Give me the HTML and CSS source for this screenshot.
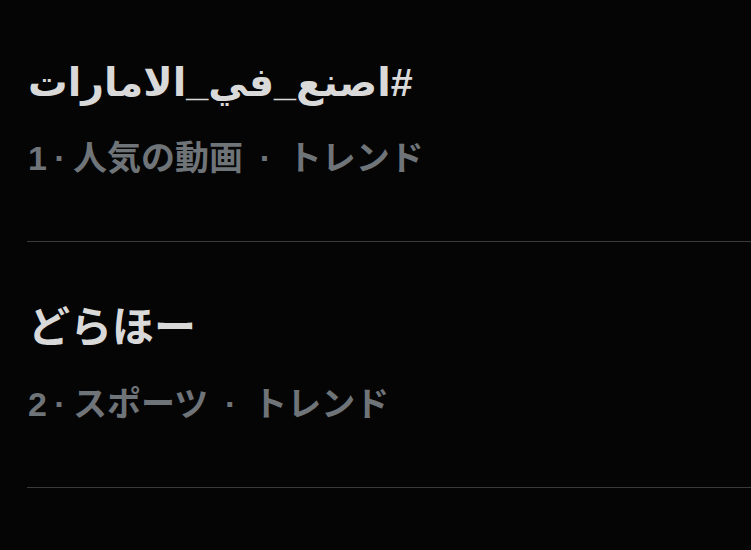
FILE: index.html
```html
<!DOCTYPE html>
<html lang="ja">
<head>
<meta charset="utf-8">
<link rel="stylesheet" href="styles.css">
</head>
<body>
<div class="trends">
  <div class="trend">
    <div class="title title-ar" dir="auto">#اصنع_في_الامارات</div>
    <div class="meta">1<span class="sep">·</span>人気の動画 <span class="sep">·</span> トレンド</div>
  </div>
  <div class="trend">
    <div class="title">どらほー</div>
    <div class="meta">2<span class="sep">·</span>スポーツ <span class="sep">·</span> トレンド</div>
  </div>
</div>
</body>
</html>
```
FILE: styles.css
```css
html, body {
  margin: 0;
  padding: 0;
  background: #050505;
}
body {
  width: 751px;
  height: 550px;
  overflow: hidden;
  font-family: "Liberation Sans", "DejaVu Sans", "Noto Sans CJK JP", sans-serif;
  font-weight: bold;
}
.trends {
  display: flex;
  flex-direction: column;
  margin-top: -4px;
}
.trend {
  display: flex;
  flex-direction: column;
  gap: 32px;
  padding: 62px 0 62px 1px;
  margin-left: 27px;
  border-bottom: 1px solid #3a3a3a;
}
.title {
  font-size: 42px;
  line-height: 48px;
  color: #d9d9d9;
  text-align: left;
  white-space: nowrap;
}
.title-ar {
  font-size: 39.5px;
}
.meta {
  font-size: 34px;
  line-height: 41px;
  color: #6f7479;
  white-space: nowrap;
}
.sep {
  display: inline-block;
  width: 26px;
  text-align: center;
}
```
